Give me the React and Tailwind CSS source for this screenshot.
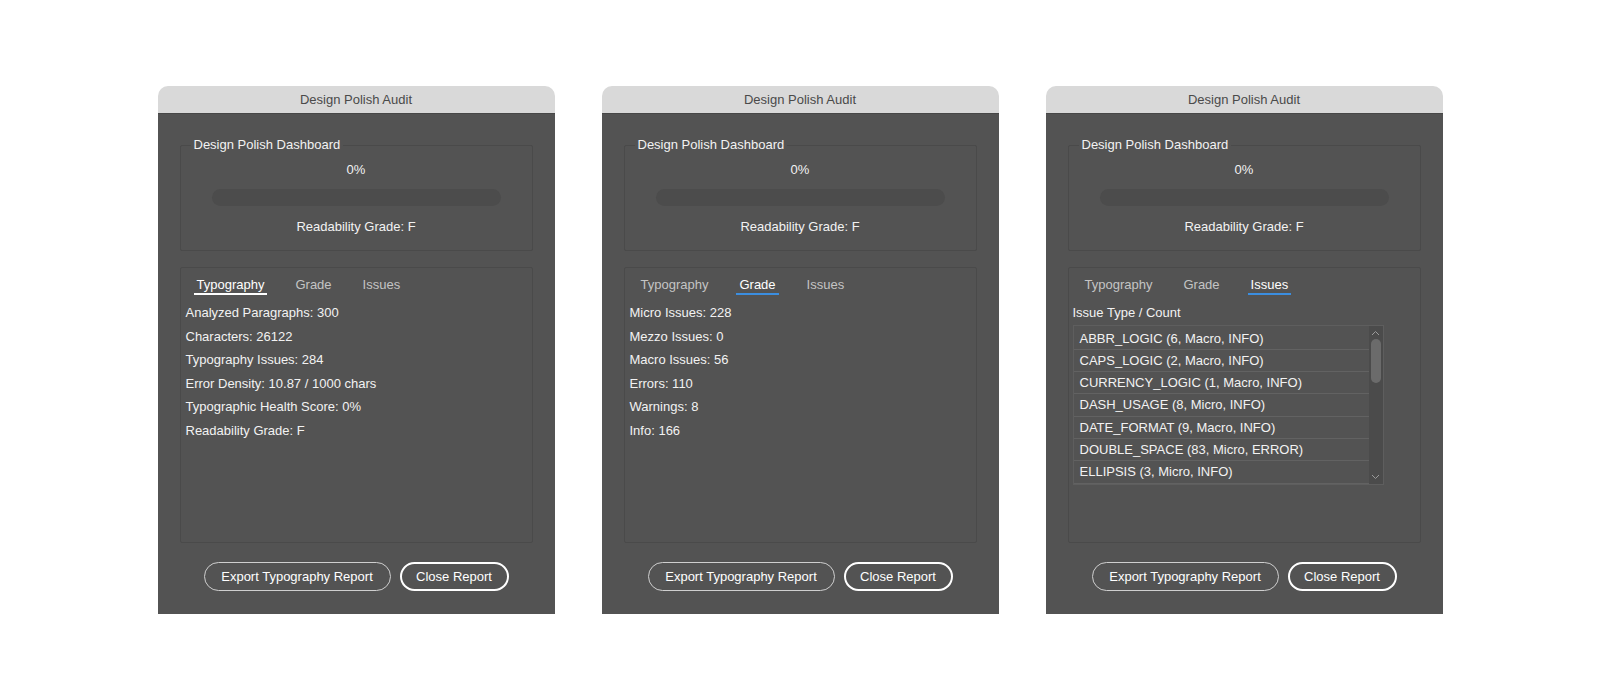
import React from "react";

// Design Polish Audit dialogs, shown once per tab
const FONT = { fontFamily: '"Liberation Sans", Arial, sans-serif' };

const typographyStats = [
  "Analyzed Paragraphs: 300",
  "Characters: 26122",
  "Typography Issues: 284",
  "Error Density: 10.87 / 1000 chars",
  "Typographic Health Score: 0%",
  "Readability Grade: F",
];

const gradeStats = [
  "Micro Issues: 228",
  "Mezzo Issues: 0",
  "Macro Issues: 56",
  "Errors: 110",
  "Warnings: 8",
  "Info: 166",
];

const issues = [
  "ABBR_LOGIC (6, Macro, INFO)",
  "CAPS_LOGIC (2, Macro, INFO)",
  "CURRENCY_LOGIC (1, Macro, INFO)",
  "DASH_USAGE (8, Micro, INFO)",
  "DATE_FORMAT (9, Macro, INFO)",
  "DOUBLE_SPACE (83, Micro, ERROR)",
  "ELLIPSIS (3, Micro, INFO)",
];

const Chevron = ({ up }) => (
  <svg width="9" height="6" viewBox="0 0 9 6" className="shrink-0">
    <path
      d={up ? "M1 5 L4.5 1.5 L8 5" : "M1 1 L4.5 4.5 L8 1"}
      fill="none"
      stroke="#9a9a9a"
      strokeWidth="1"
    />
  </svg>
);

const Tabs = ({ active, white }) => {
  const tabs = ["Typography", "Grade", "Issues"];
  return (
    <div className="flex gap-[25px] pl-[13px]">
      {tabs.map((t) => (
        <div
          key={t}
          className={
            t === active
              ? white
                ? "px-[3px] leading-[16px] border-b-2 border-white text-white"
                : "px-[3px] leading-[16px] border-b-2 border-[#3b8ee0] text-white"
              : "px-[3px] leading-[16px] border-b-2 border-transparent text-[#c4c4c4]"
          }
        >
          {t}
        </div>
      ))}
    </div>
  );
};

const StatList = ({ lines }) => (
  <div className="pl-[5px] mt-[6px] leading-[23.5px] text-[#f2f2f2]">
    {lines.map((l) => (
      <div key={l}>{l}</div>
    ))}
  </div>
);

const IssueList = () => (
  <div className="pl-[4px] mt-[6px] text-[#f2f2f2]">
    <div className="leading-[23.5px]">Issue Type / Count</div>
    <div className="w-[311px] h-[160px] border border-[#5e5e5e] flex">
      <div className="flex-1 pt-[2px] overflow-hidden">
        {issues.map((i) => (
          <div
            key={i}
            className="h-[22.33px] leading-[22px] pl-[6px] border-b border-[#626262]"
          >
            {i}
          </div>
        ))}
      </div>
      <div className="w-[14px] bg-[#4b4b4b] flex flex-col items-center pt-[4px] pb-[4px]">
        <Chevron up />
        <div className="mt-[3px] w-[10px] h-[44px] rounded-full bg-[#6b6b6b]" />
        <div className="flex-1" />
        <Chevron />
      </div>
    </div>
  </div>
);

const AuditPanel = ({ active }) => {
  return (
    <div
      className="w-[397px] h-[528px] flex flex-col rounded-t-[10px] overflow-hidden text-[13px]"
      style={FONT}
    >
      {/* Title bar */}
      <div className="h-[28px] shrink-0 bg-[#d9d9d9] flex items-center justify-center text-[#4a4a4a] border-b border-[#474747]">
        Design Polish Audit
      </div>

      <div className="flex-1 bg-[#535353] px-[22px] pt-[23px] flex flex-col">
        {/* Dashboard group box */}
        <fieldset className="border border-[#4a4a4a] rounded-[2px] pt-[9px] pb-[15px] text-[#f2f2f2] text-center">
          <legend className="ml-[10px] px-[3px] leading-[16px] text-left">
            Design Polish Dashboard
          </legend>
          <div className="leading-[16px]">0%</div>
          <div className="mt-[11px] mx-auto w-[289px] h-[17px] rounded-full bg-[#4c4c4c]" />
          <div className="mt-[13px] leading-[16px]">Readability Grade: F</div>
        </fieldset>

        {/* Tabbed report */}
        <div className="mt-[16px] h-[276px] border border-[#4a4a4a] rounded-[2px] pt-[9px]">
          <Tabs active={active} white={active === "Typography"} />
          {active === "Typography" && <StatList lines={typographyStats} />}
          {active === "Grade" && <StatList lines={gradeStats} />}
          {active === "Issues" && <IssueList />}
        </div>

        {/* Buttons */}
        <div className="mt-[19px] flex justify-center gap-[9px]">
          <button className="w-[187px] h-[29px] rounded-full border border-[#cfcfcf] text-white">
            Export Typography Report
          </button>
          <button className="w-[109px] h-[29px] rounded-full border-2 border-white text-white">
            Close Report
          </button>
        </div>
      </div>
    </div>
  );
};

export default function App() {
  return (
    <div className="w-full h-[700px] bg-white flex items-center justify-center gap-[47px]">
      <AuditPanel active="Typography" />
      <AuditPanel active="Grade" />
      <AuditPanel active="Issues" />
    </div>
  );
}
